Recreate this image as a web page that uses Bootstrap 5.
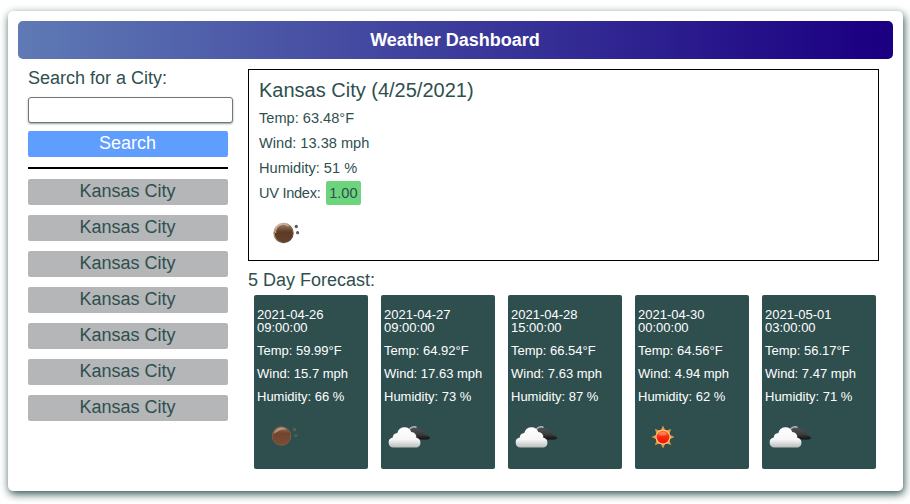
<!DOCTYPE html>
<html lang="en">
<head>
<meta charset="utf-8">
<meta name="viewport" content="width=device-width, initial-scale=1">
<title>Weather Dashboard</title>
<link href="https://cdn.jsdelivr.net/npm/bootstrap@5.3.0/dist/css/bootstrap.min.css" rel="stylesheet">
<style>
  body { font-family: "Liberation Sans", Arial, sans-serif; color: #2f4f4f; font-size: 18px; line-height: 20px; background: #fff; min-height: 504px; padding: 11px 7px 13px 8px; }
  .dash { height: 480px; padding: 10px; border-radius: 5px; box-shadow: 1px 3px 9px #2f4f4f; background: #fff; }
  .dash-title { height: 38px; border-radius: 5px; background: linear-gradient(to right, #5f7ab5, #1b0082 98%); font-size: 18px; font-weight: 700; color: #fff; padding-right: 1px; }
  .side { width: 200px; margin-left: 10px; padding-top: 9px; }
  .city-input { width: 205px; height: 26px; padding: 2px 6px; border: 1px solid #767676; border-radius: 3px; box-shadow: 0 1px 2px #2f4f4f88; margin-top: 9px; }
  .side-btn { height: 26px; border-radius: 2px; font-size: 18px; line-height: 22px; padding: 0 1px 2px 0; }
  .search-btn { background: #5f9dff; color: #fff; margin-top: 8px; }
  .side-rule { height: 2px; background: #000; margin: 10px 0; }
  .city-list { gap: 10px; }
  .city-btn { background: #b4b6b8; color: #2f4f4f; }
  .main-col { width: 631px; margin-left: 20px; padding-top: 10px; }
  .today { height: 192px; border: 1px solid #000; padding: 9px 10px; font-size: 14.6px; }
  .today h2 { font-size: 20px; line-height: 22px; margin: 0 0 7px; }
  .today p { margin: 0 0 5px; line-height: 20px; }
  .uv-label { letter-spacing: -.3px; }
  .uv { background: #6dd47e; border-radius: 2px; padding: 4px 3px; margin-left: 2px; }
  .today svg { margin: 4px 0 0 -1px; }
  .forecast-title { font-size: 18px; line-height: 20px; margin: 9px 0 5px; }
  .day { width: 114px; height: 174px; padding: 13px 3px 0; border-radius: 2px; background: #2f4f4f; color: #fff; font-size: 13px; line-height: 13px; }
  .day p { margin: 0 0 10px; }
  .day svg { margin-top: -2px; }
  .days { gap: 13px; margin-left: 6px; }
</style>
</head>
<body>
<svg width="0" height="0" class="position-absolute" aria-hidden="true">
  <defs>
    <linearGradient id="gMoon" x1="0" y1="0" x2="0" y2="1"><stop offset="0" stop-color="#a28267"/><stop offset=".45" stop-color="#5b3a26"/><stop offset="1" stop-color="#65412a"/></linearGradient>
    <linearGradient id="gMoonDim" x1="0" y1="0" x2="0" y2="1"><stop offset="0" stop-color="#9b755e"/><stop offset=".35" stop-color="#70452c"/><stop offset="1" stop-color="#7a4d33"/></linearGradient>
    <linearGradient id="gRim" x1="0" y1="0" x2="1" y2="1"><stop offset="0" stop-color="#e3cdb9"/><stop offset=".5" stop-color="#8d6b50"/><stop offset="1" stop-color="#4a3023"/></linearGradient>
    <linearGradient id="gCloud" x1="0" y1="0" x2="0" y2="1"><stop offset="0" stop-color="#fff"/><stop offset=".6" stop-color="#f7f7f7"/><stop offset="1" stop-color="#b9bcbc"/></linearGradient>
    <linearGradient id="gDark" x1="0" y1="0" x2="0" y2="1"><stop offset="0" stop-color="#55565a"/><stop offset=".6" stop-color="#3d3c3e"/><stop offset="1" stop-color="#111"/></linearGradient>
    <linearGradient id="gSun" x1="0" y1="0" x2="0" y2="1"><stop offset="0" stop-color="#ff7a35"/><stop offset=".5" stop-color="#f52a0c"/><stop offset="1" stop-color="#fa0d00"/></linearGradient>
    <symbol id="moon" viewBox="0 0 50 50">
      <circle cx="25.500" cy="25" r="9.600" fill="url(#gMoon)" stroke="url(#gRim)" stroke-width="1.200"/>
      <path d="M17.600 25a7.900 7.900 0 0 1 13-6.800" fill="none" stroke="#dfc9b6" stroke-width="1.300" opacity=".7"/>
      <circle cx="38.300" cy="18.500" r="1.700" fill="#5e5e5e"/><circle cx="39.600" cy="24.700" r="1.600" fill="#5e5e5e"/>
    </symbol>
    <symbol id="moonDim" viewBox="0 0 50 50">
      <circle cx="24.500" cy="25" r="9.300" fill="url(#gMoonDim)" stroke="#80604d" stroke-width=".8"/>
      <path d="M16.500 23a8.200 8.200 0 0 1 13-4.700q-6 0-9 2.200t-4 2.500z" fill="#d0b29d" opacity=".65"/>
      <circle cx="37.500" cy="18.500" r="1.700" fill="#5c5c57"/><circle cx="39" cy="24.500" r="1.500" fill="#5c5c57"/>
    </symbol>
    <symbol id="clouds" viewBox="0 0 50 50">
      <path d="M24 19a6.600 6.600 0 0 1 11-.8 7 7 0 0 1 6.700 5.800c1.700.2 4.300 1.300 4.300 2.800 0 1.300-1.200 1.700-2.500 1.700H31z" fill="url(#gDark)"/>
      <path d="M25 19a5.600 5.600 0 0 1 7.500-2.700" fill="none" stroke="#b8bcbe" stroke-width="1.300"/>
      <path d="M9.500 36.500a5 5 0 0 1-.8-9.900 5 5 0 0 1 4.600-4.600 7.300 7.300 0 0 1 14-1 5 5 0 0 1 5 5.800 5 5 0 0 1 .6 9.700z" fill="url(#gCloud)"/>
    </symbol>
    <symbol id="sun" viewBox="0 -1 50 50">
      <path d="M25 13.500L27.400 18.800 33.100 16.900 31.200 22.600 36.500 25 31.200 27.400 33.100 33.100 27.400 31.200 25 36.500 22.600 31.200 16.900 33.100 18.800 27.400 13.500 25 18.800 22.600 16.900 16.900 22.600 18.800z" fill="#e09a42"/>
      <circle cx="25" cy="25" r="7.500" fill="#ffd08a"/>
      <circle cx="25" cy="25" r="6.500" fill="url(#gSun)"/>
      <ellipse cx="24.500" cy="21.700" rx="4" ry="1.800" fill="#ffbf86" opacity=".4"/>
    </symbol>
  </defs>
</svg>

<div class="dash">
  <header class="dash-title d-flex align-items-center justify-content-center">Weather Dashboard</header>
  <div class="d-flex">
    <aside class="side flex-shrink-0">
      <label for="city" class="d-block">Search for a City:</label>
      <input id="city" type="text" class="city-input d-block">
      <button class="btn side-btn search-btn w-100 border-0 d-block">Search</button>
      <div class="side-rule"></div>
      <div class="city-list d-grid">
        <button class="btn side-btn city-btn border-0">Kansas City</button>
        <button class="btn side-btn city-btn border-0">Kansas City</button>
        <button class="btn side-btn city-btn border-0">Kansas City</button>
        <button class="btn side-btn city-btn border-0">Kansas City</button>
        <button class="btn side-btn city-btn border-0">Kansas City</button>
        <button class="btn side-btn city-btn border-0">Kansas City</button>
        <button class="btn side-btn city-btn border-0">Kansas City</button>
      </div>
    </aside>
    <main class="main-col flex-shrink-0">
      <section class="today">
        <h2 class="fw-normal">Kansas City (4/25/2021)</h2>
        <p>Temp: 63.48°F</p>
        <p>Wind: 13.38 mph</p>
        <p>Humidity: 51 %</p>
        <p><span class="uv-label">UV Index: </span><span class="uv">1.00</span></p>
        <svg class="d-block" width="50" height="50"><use href="#moon"/></svg>
      </section>
      <h3 class="forecast-title fw-normal">5 Day Forecast:</h3>
      <div class="days d-flex">
        <div class="day"><p>2021-04-26<br>09:00:00</p><p>Temp: 59.99°F</p><p>Wind: 15.7 mph</p><p>Humidity: 66 %</p><svg class="d-block" width="50" height="50"><use href="#moonDim"/></svg></div>
        <div class="day"><p>2021-04-27<br>09:00:00</p><p>Temp: 64.92°F</p><p>Wind: 17.63 mph</p><p>Humidity: 73 %</p><svg class="d-block" width="50" height="50"><use href="#clouds"/></svg></div>
        <div class="day"><p>2021-04-28<br>15:00:00</p><p>Temp: 66.54°F</p><p>Wind: 7.63 mph</p><p>Humidity: 87 %</p><svg class="d-block" width="50" height="50"><use href="#clouds"/></svg></div>
        <div class="day"><p>2021-04-30<br>00:00:00</p><p>Temp: 64.56°F</p><p>Wind: 4.94 mph</p><p>Humidity: 62 %</p><svg class="d-block" width="50" height="50"><use href="#sun"/></svg></div>
        <div class="day"><p>2021-05-01<br>03:00:00</p><p>Temp: 56.17°F</p><p>Wind: 7.47 mph</p><p>Humidity: 71 %</p><svg class="d-block" width="50" height="50"><use href="#clouds"/></svg></div>
      </div>
    </main>
  </div>
</div>
<script src="https://cdn.jsdelivr.net/npm/bootstrap@5.3.0/dist/js/bootstrap.bundle.min.js"></script>
</body>
</html>
